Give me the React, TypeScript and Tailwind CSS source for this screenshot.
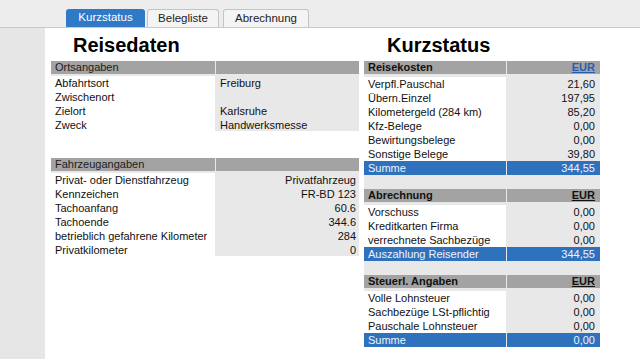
import React from "react";

type Row = { label: string; value?: string; kind?: "head" | "sum"; link?: boolean };

const ort: Row[] = [
  { label: "Ortsangaben", kind: "head" },
  { label: "Abfahrtsort", value: "Freiburg" },
  { label: "Zwischenort", value: "" },
  { label: "Zielort", value: "Karlsruhe" },
  { label: "Zweck", value: "Handwerksmesse" },
];

const fahrzeug: Row[] = [
  { label: "Fahrzeugangaben", kind: "head" },
  { label: "Privat- oder Dienstfahrzeug", value: "Privatfahrzeug" },
  { label: "Kennzeichen", value: "FR-BD 123" },
  { label: "Tachoanfang", value: "60.6" },
  { label: "Tachoende", value: "344.6" },
  { label: "betrieblich gefahrene Kilometer", value: "284" },
  { label: "Privatkilometer", value: "0" },
];

const sections: Row[][] = [
  [
    { label: "Reisekosten", value: "EUR", kind: "head", link: true },
    { label: "Verpfl.Pauschal", value: "21,60" },
    { label: "Übern.Einzel", value: "197,95" },
    { label: "Kilometergeld (284 km)", value: "85,20" },
    { label: "Kfz-Belege", value: "0,00" },
    { label: "Bewirtungsbelege", value: "0,00" },
    { label: "Sonstige Belege", value: "39,80" },
    { label: "Summe", value: "344,55", kind: "sum" },
  ],
  [
    { label: "Abrechnung", value: "EUR", kind: "head" },
    { label: "Vorschuss", value: "0,00" },
    { label: "Kreditkarten Firma", value: "0,00" },
    { label: "verrechnete Sachbezüge", value: "0,00" },
    { label: "Auszahlung Reisender", value: "344,55", kind: "sum" },
  ],
  [
    { label: "Steuerl. Angaben", value: "EUR", kind: "head" },
    { label: "Volle Lohnsteuer", value: "0,00" },
    { label: "Sachbezüge LSt-pflichtig", value: "0,00" },
    { label: "Pauschale Lohnsteuer", value: "0,00" },
    { label: "Summe", value: "0,00", kind: "sum" },
  ],
];

const LeftTable = ({ rows, alignRight }: { rows: Row[]; alignRight?: boolean }) => (
  <div className="flex flex-col gap-px bg-[#e8e8e8]">
    {rows.map((r, i) =>
      r.kind === "head" ? (
        <div key={i} className="grid grid-cols-[164px_143px] gap-px h-[13px] leading-[13px] mb-px">
          <div className="bg-[#a3a3a3] pl-[4px] text-[#1c1c1c]">{r.label}</div>
          <div className="bg-[#a3a3a3]" />
        </div>
      ) : (
        <div key={i} className="grid grid-cols-[164px_143px] gap-px h-[13px] leading-[14px]">
          <div className="bg-white pl-[4px] text-[#111]">{r.label}</div>
          <div className={alignRight ? "text-right pr-[3px] text-[#111]" : "pl-[4px] text-[#111]"}>{r.value}</div>
        </div>
      )
    )}
  </div>
);

const RightTable = () => (
  <div className="flex flex-col bg-[#e8e8e8]">
    {sections.map((rows, s) => (
      <div key={s} className={s > 0 ? "flex flex-col gap-px mt-[15px]" : "flex flex-col gap-px"}>
        {rows.map((r, i) => {
          if (r.kind === "head")
            return (
              <div key={i} className="grid grid-cols-[142px_93px] gap-px h-[13px] leading-[13px] font-bold mb-[2px]">
                <div className="bg-[#a3a3a3] pl-[4px] text-[#111]">{r.label}</div>
                <div
                  className={
                    r.link
                      ? "bg-[#a3a3a3] pr-[5px] text-right underline text-[#2a5cae]"
                      : "bg-[#a3a3a3] pr-[5px] text-right underline text-[#111]"
                  }
                >
                  {r.value}
                </div>
              </div>
            );
          if (r.kind === "sum")
            return (
              <div key={i} className="grid grid-cols-[142px_93px] gap-px h-[13px] leading-[14px] text-[#eef4fc]">
                <div className="bg-[#2e72be] pl-[4px]">{r.label}</div>
                <div className="bg-[#2e72be] pr-[5px] text-right">{r.value}</div>
              </div>
            );
          return (
            <div key={i} className="grid grid-cols-[142px_93px] gap-px h-[13px] leading-[14px] text-[#111]">
              <div className="bg-white pl-[4px]">{r.label}</div>
              <div className="pr-[5px] text-right">{r.value}</div>
            </div>
          );
        })}
      </div>
    ))}
  </div>
);

export default function App() {
  return (
    <div className="w-[640px] h-[359px] overflow-hidden flex flex-col bg-[#ededed] text-[11px] font-['Liberation_Sans',Arial,sans-serif]">
      <div className="h-[28px] shrink-0 flex items-end pl-[66px] gap-[2px] border-b border-[#c9c9c9]">
        <div className="w-[79px] h-[18px] rounded-t-[3px] bg-[#2f79c6] text-white text-[11.5px] flex items-center justify-center">
          Kurzstatus
        </div>
        <div className="w-[72px] h-[18px] rounded-t-[3px] bg-[#f4f4f4] border border-b-0 border-[#c4c4c4] text-[#222] text-[11.5px] flex items-center justify-center">
          Belegliste
        </div>
        <div className="ml-[2px] w-[86px] h-[18px] rounded-t-[3px] bg-[#f4f4f4] border border-b-0 border-[#c4c4c4] text-[#222] text-[11.5px] flex items-center justify-center">
          Abrechnung
        </div>
      </div>
      <div className="flex flex-1">
        <div className="w-[45px] bg-[#e6e6e6]" />
        <div className="flex-1 bg-white pt-[6px] pl-[6px] flex gap-[5px]">
          <div className="w-[308px] flex flex-col">
            <h1 className="h-[22px] leading-[22px] mb-[5px] pl-[22px] text-[20px] font-bold text-black">Reisedaten</h1>
            <LeftTable rows={ort} />
            <div className="h-[27px]" />
            <LeftTable rows={fahrzeug} alignRight />
          </div>
          <div className="w-[236px] flex flex-col">
            <h1 className="h-[22px] leading-[22px] mb-[5px] pl-[23px] text-[20px] font-bold text-black">Kurzstatus</h1>
            <RightTable />
          </div>
        </div>
      </div>
    </div>
  );
}
